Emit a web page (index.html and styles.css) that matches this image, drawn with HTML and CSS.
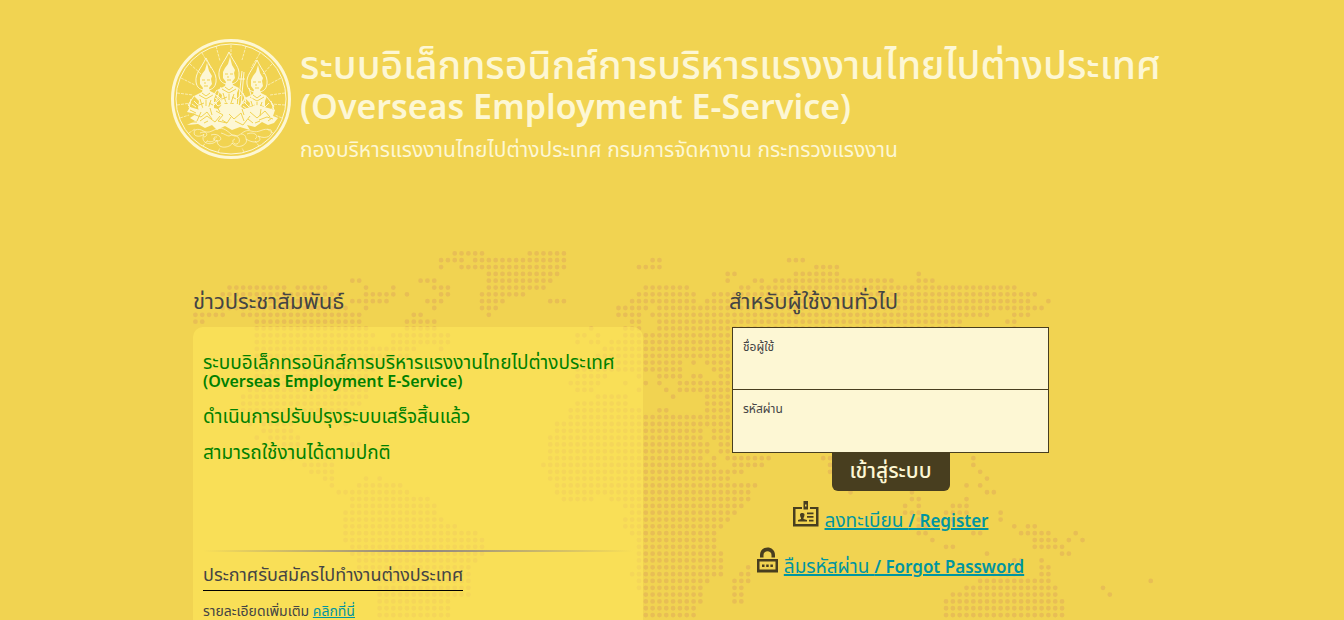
FILE: index.html
```
<!DOCTYPE html>
<html lang="th">
<head>
<meta charset="utf-8">
<meta name="viewport" content="width=device-width, initial-scale=1">
<title>ระบบอิเล็กทรอนิกส์การบริหารแรงงานไทยไปต่างประเทศ</title>
<link rel="stylesheet" href="styles.css">
</head>
<body>
<header class="banner">
  <svg class="emblem" viewBox="0 0 120 120" aria-hidden="true">
    <defs>
      <g id="deity">
        <path class="line" d="M0-23C-5-12-11-8-10 1C-9 7-6 8-3 9M0-23C5-12 11-8 10 1C9 7 6 8 3 9"/>
        <path class="solid" d="M1-18L3-10L6-5L5-2L6 3L3 7L4 10L10 13L8 18L8 28L4 33L-5 33L-8 27L-7 20L-12 15L-4 11L-3 7L-6 3L-6-3L-4-7L-1-11Z"/>
        <path class="cut" d="M-4-1h3M1-1h3M-1 1v2M-2 5h4M-7 14L0 18L7 14M-4 12l4 3 4-3M-6 18L-2 31M5 19L1 31M0 19v6M-7 24l5-2M7 24l-4-2M-5 28l4 1M5 28l-3 1"/>
        <path class="line" d="M-12 15L-18 24L-11 31L-3 27M10 14L17 23L11 31L4 27M-15 18l-2 9 5 2M14 18l3 9-5 2M-12 20l4 4M12 20l-4 4M-14 23l4 3"/>
      </g>
    </defs>
    <circle class="ring" cx="60" cy="60" r="58.5"/>
    <circle class="hair" cx="60" cy="60" r="55"/>
    <path class="rays" d="M60 6V16M45 7L49 22M75 7L71 21M31 14L40 29M89 14L80 29M19 25L30 35M101 25L92 35M10 39L24 46M110 39L97 46M6 54L22 56M114 54L99 56M6 66L20 64M114 66L100 65M9 79L18 76M111 79L104 76M18 94L24 90M102 94L96 90M32 107L37 101M88 107L84 102M47 113L49 109M73 113L71 109"/>
    <use href="#deity" x="35" y="42"/>
    <use href="#deity" x="86" y="44"/>
    <use href="#deity" x="58" y="36"/>
    <path class="line" d="M71 32L67 68M73 33L70 66M68 40h6M50 48L44 65M78 49L84 70"/>
    <path class="solid" d="M16 86L24 82L19 79L25 75L16 73L19 68L29 71L35 67L47 70L52 65L66 65L73 70L86 66L97 69L104 71L102 77L107 79L103 84L97 86L91 83L84 88L76 86L79 91L69 88L61 91L54 87L46 91L41 86L34 89L27 85Z"/>
    <path class="cut" d="M19 71l6 3M22 75l8 3 6-5 5 7M29 82l7-5 8 6 5-6M45 72l7 4-5 6 9 2M58 75l5 5 7-6 3 8M64 82l8 4 7-9M79 73l7 6 8-7 5 6M88 81l8-3 6 2M51 81l5 3 4-6M30 73l-4 9M77 80l5 4M39 69l2 7M90 70l-1 7M46 68l3 5M71 70l2 6M20 83h6M97 82l4-3M33 84l4-2M84 84l5-2"/>
    <path class="cloud" d="M24 91C31 88 33 96 41 92S52 88 60 95S71 89 80 92S91 88 100 91M24 91C20 99 31 98 33 95C28 106 43 107 46 101C46 112 61 108 61 104C68 112 78 104 75 100C84 106 93 102 87 97C96 101 102 96 100 91M40 96c8-3 14 6 6 6-5 0-4-5 0-4M58 97c8-4 14 5 8 8-4 1-6-4-2-5M76 95c7-3 13 2 8 5M29 94c7-3 9 3 4 4M50 94c4 1 6 3 8 3M36 102c4 2 8 0 8-3M70 95c4 0 5 3 5 5"/>
  </svg>
  <div class="banner-text">
    <h1>ระบบอิเล็กทรอนิกส์การบริหารแรงงานไทยไปต่างประเทศ<br><span class="title-en">(Overseas Employment E-Service)</span></h1>
    <p>กองบริหารแรงงานไทยไปต่างประเทศ กรมการจัดหางาน กระทรวงแรงงาน</p>
  </div>
</header>

<main class="content">
  <!-- One unit per dot; every horizontal run is drawn as a dotted stroke. -->
  <svg class="world" viewBox="-0.5 -0.5 142 55" aria-hidden="true">
    <path d="M38 0h4.1M49 0h5.1
M36 1h3.1M41 1h13.1M67 1h1.1M87 1h2.1
M36 2h.1M39 2h15.1M65 2h3.1M91 2h3.1
M43 3h10.1M78 3h1.1M88 3h6.1M106 3h.1
M23 4h1.1M33 4h2.1M43 4h9.1M78 4h.1M82 4h1.1M85 4h17.1M106 4h2.1
M5 5h8.1M15 5h4.1M25 5h.1M29 5h.1M35 5h2.1M43 5h8.1M66 5h6.1M80 5h1.1M83 5h37.1
M4 6h17.1M25 6h4.1M31 6h.1M36 6h1.1M42 6h6.1M65 6h8.1M76 6h47.1
M5 7h15.1M23 7h5.1M34 7h2.1M42 7h3.1M52 7h2.1M64 7h9.1M75 7h47.1M125 7h.1
M4 8h18.1M25 8h.1M35 8h.1M42 8h2.1M62 8h4.1M68 8h56.1
M0 9h4.1M7 9h17.1M32 9h1.1M43 9h.1M62 9h3.1M67 9h49.1M120 9h2.1
M0 10h1.1M9 10h15.1M31 10h4.1M64 10h1.1M68 10h44.1M119 10h1.1
M9 11h16.1M31 11h4.1M58 11h.1M63 11h2.1M68 11h44.1M120 11h.1
M9 12h17.1M29 12h8.1M56 12h1.1M59 12h.1M63 12h15.1
M9 13h16.1M29 13h8.1M56 13h.1M58 13h1.1M61 13h17.1
M9 14h23.1M36 14h.1M60 14h18.1
M9 15h22.1M59 15h19.1
M9 16h19.1M57 16h14.1M73 16h.1M75 16h3.1
M9 17h17.1M56 17h15.1M76 17h2.1
M9 18h16.1M56 18h4.1M65 18h.1M68 18h3.1M73 18h1.1M77 18h1.1
M8 19h16.1M55 19h4.1M63 19h.1M66 19h.1M68 19h.1M71 19h7.1
M8 20h17.1M56 20h2.1M65 20h.1M69 20h.1M71 20h7.1
M7 21h18.1M59 21h4.1M70 21h.1M75 21h3.1
M7 22h17.1M56 22h7.1M75 22h3.1
M7 23h15.1M55 23h10.1M68 23h1.1M75 23h3.1
M8 24h12.1M55 24h23.1
M8 25h.1M10 25h4.1M22 25h.1M53 25h25.1
M10 26h4.1M53 26h21.1M76 26h2.1
M9 27h.1M11 27h4.1M52 27h22.1M76 27h2.1
M13 28h2.1M23 28h1.1M52 28h23.1M77 28h1.1
M13 29h1.1M52 29h23.1M77 29h1.1
M13 30h1.1M17 30h3.1M52 30h22.1M76 30h.1M78 30h6.1M92 30h1.1M114 30h.1
M16 31h4.1M51 31h.1M52 31h24.1M79 31h4.1M93 31h.1M114 31h.1
M17 32h3.1M52 32h28.1M93 32h.1M115 32h.1
M19 33h1.1M25 33h.1M27 33h.1M52 33h26.1M116 33h.1
M20 34h.1M24 34h6.1M53 34h29.1M113 34h.1M115 34h.1
M21 35h10.1M53 35h28.1M96 35h.1M105 35h.1M116 35h1.1
M23 36h11.1M54 36h4.1M61 36h20.1M105 36h1.1M113 36h.1
M23 37h12.1M63 37h17.1M104 37h.1M106 37h.1M111 37h2.1
M22 38h13.1M64 38h15.1M104 38h2.1M110 38h3.1M118 38h.1
M22 39h14.1M63 39h15.1M106 39h.1M111 39h1.1M118 39h.1
M22 40h16.1M63 40h14.1M106 40h1.1M120 40h.1M122 40h1.1
M22 41h19.1M64 41h12.1M106 41h1.1M114 41h1.1M121 41h4.1M129 41h.1
M22 42h20.1M65 42h11.1M108 42h.1M123 42h3.1M128 42h.1M130 42h.1
M23 43h19.1M65 43h11.1M110 43h1.1M123 43h4.1
M23 44h19.1M65 44h12.1M116 44h.1M127 44h1.1
M24 45h17.1M65 45h12.1M120 45h1.1M124 45h.1
M24 46h16.1M65 46h12.1M81 46h.1M124 46h1.1
M25 47h15.1M64 47h13.1M80 47h1.1M117 47h4.1M124 47h1.1
M27 48h13.1M65 48h10.1M79 48h2.1M115 48h10.1M140 48h.1
M27 49h13.1M65 49h9.1M79 49h1.1M113 49h13.1M133 49h.1
M27 50h13.1M66 50h8.1M79 50h1.1M111 50h15.1M134 50h.1
M27 51h10.1M66 51h8.1M79 51h1.1M110 51h17.1
M27 52h10.1M66 52h7.1M110 52h17.1
M27 53h10.1M66 53h7.1M110 53h17.1"/>
  </svg>

  <section class="news">
    <h2>ข่าวประชาสัมพันธ์</h2>
    <div class="news-panel">
      <div class="notice">
        <p>ระบบอิเล็กทรอนิกส์การบริหารแรงงานไทยไปต่างประเทศ<br><span class="notice-en">(Overseas Employment E-Service)</span></p>
        <p>ดำเนินการปรับปรุงระบบเสร็จสิ้นแล้ว</p>
        <p>สามารถใช้งานได้ตามปกติ</p>
      </div>
      <hr class="divider">
      <h3>ประกาศรับสมัครไปทำงานต่างประเทศ</h3>
      <p class="more">รายละเอียดเพิ่มเติม <a href="#news">คลิกที่นี่</a></p>
    </div>
  </section>

  <section class="login">
    <h2>สำหรับผู้ใช้งานทั่วไป</h2>
    <form>
      <div class="field">
        <label for="username">ชื่อผู้ใช้</label>
        <input id="username" type="text" autocomplete="username">
      </div>
      <div class="field">
        <label for="password">รหัสผ่าน</label>
        <input id="password" type="password" autocomplete="current-password">
      </div>
      <button type="submit">เข้าสู่ระบบ</button>
    </form>
    <p class="action">
      <svg class="icon" viewBox="0 0 26 26" aria-hidden="true">
        <path d="M0 6H9V8H2.500V23H23V8H17V6H25.500V25.500H0Z"/>
        <path d="M10.500 0h4.500v8.500h-4.500zM12 3.500v2h1.500v-2z" fill-rule="evenodd"/>
        <path d="M7 13.500C7 11.500 11.500 11.500 11.500 13.500C11.500 15 11 16 10.500 17V18L14 19V20.500H5V19L8 18V17C7.500 16 7 15 7 13.500ZM14 11.500h6.500v1.800H14zM14 15h6.500v1.800H14zM16 18.700h4.500v1.800H16z"/>
      </svg>
      <a href="#register">ลงทะเบียน <span class="latin">/ Register</span></a>
    </p>
    <p class="action">
      <svg class="icon icon-lock" viewBox="0 0 21 26" aria-hidden="true">
        <path d="M3 10.500V8C3 -2 18 -2 18 8V10.500H14.500V8C14.500 3 6.500 3 6.500 8V10.500Z"/>
        <path d="M0 12H21V25.500H0ZM2.500 14.500V22.500H18.500V14.500Z" fill-rule="evenodd"/>
        <path d="M5 17.500h2.500v2.500H5zM9.200 17.500h2.500v2.500H9.200zM13.400 17.500h2.500v2.500h-2.500z"/>
      </svg>
      <a href="#forgot">ลืมรหัสผ่าน <span class="latin">/ Forgot Password</span></a>
    </p>
  </section>
</main>
</body>
</html>
```
FILE: styles.css
```
* {
  box-sizing: border-box;
}

body {
  margin: 0;
  min-height: 100vh;
  overflow: hidden;
  background: #f1d351;
  color: #444444;
  font-family: "Noto Sans Thai", "Noto Sans", "Open Sans", sans-serif;
}

h1,
h2,
h3,
p {
  margin: 0;
  font-weight: 400;
}

.banner,
.content {
  width: 100%;
  max-width: 1002px;
  margin: 0 auto;
}

.banner {
  display: flex;
  gap: 9px;
  height: 280px;
  padding-top: 39px;
  color: #fdf7d4;
  white-space: nowrap;
}

.emblem {
  flex: none;
  width: 120px;
  height: 120px;
  stroke-linejoin: round;
}

.emblem .ring { fill: none; stroke: #fdf7d4; stroke-width: 3; }
.emblem .hair { fill: none; stroke: #fdf7d4; stroke-width: 1; }
.emblem .rays { fill: none; stroke: #fdf7d4; stroke-width: 1; stroke-dasharray: 3 1; opacity: 0.7; }
.emblem .line { fill: none; stroke: #fdf7d4; stroke-width: 1; }
.emblem .cloud { fill: none; stroke: #fdf7d4; stroke-width: 1; opacity: 0.7; }
.emblem .solid { fill: #fdf7d4; }
.emblem .cut { fill: none; stroke: #f1d351; stroke-width: 1; }

.banner-text h1 {
  padding-top: 9px;
  font-size: 39px;
  font-weight: 500;
  line-height: 40px;
}

.title-en {
  font-size: 34px;
  font-weight: 600;
}

.banner-text p {
  padding-top: 10px;
  font-size: 21px;
  line-height: 24px;
}

.content {
  position: relative;
  display: flex;
  gap: 87px;
  padding-left: 22px;
}

.world {
  position: absolute;
  left: 21px;
  top: -30px;
  width: 969px;
  fill: none;
  stroke: #e8be55;
  stroke-width: 0.7;
  stroke-linecap: round;
  stroke-dasharray: 0 1;
}

.news,
.login {
  position: relative;
}

h2 {
  height: 47px;
  font-size: 22px;
  line-height: 46px;
  white-space: nowrap;
}

.news {
  width: 450px;
}

.news-panel {
  padding: 28px 10px;
  border-radius: 10px;
  background: rgba(255, 233, 92, 0.55);
  white-space: nowrap;
}

.notice {
  display: grid;
  gap: 18px;
  height: 195px;
  align-content: start;
  color: #008000;
  font-size: 19px;
  line-height: 18px;
}

.notice-en {
  font-size: 16px;
  font-weight: 600;
}

.divider {
  height: 2px;
  margin: 0;
  border: 0;
  background: linear-gradient(to right, transparent, #8c8383 50%, transparent);
}

h3 {
  width: fit-content;
  margin-top: 10px;
  border-bottom: 1px solid #000000;
  font-size: 18px;
  line-height: 28px;
}

.more {
  padding-top: 9px;
  font-size: 14px;
  line-height: 24px;
}

a {
  color: #0095a0;
}

.login {
  width: 320px;
}

.login h2 {
  margin-left: -1px;
}

form,
.action {
  width: 317px;
  margin-left: 2px;
}

form {
  display: flex;
  flex-direction: column;
  align-items: center;
}

.field {
  display: flex;
  flex-direction: column;
  width: 100%;
  height: 63px;
  padding: 10px;
  border: 1px solid #483e1f;
  background: #fdf7d4;
}

.field + .field {
  height: 64px;
  margin-top: -1px;
}

.field label {
  font-size: 12px;
  line-height: 18px;
}

.field input {
  width: 100%;
  height: 24px;
  padding: 0;
  border: 0;
  outline: 0;
  background: transparent;
  font-size: 16px;
}

button {
  width: 118px;
  height: 38px;
  padding: 0;
  border: 0;
  border-radius: 0 0 6px 6px;
  background: #483e1f;
  color: #fdf7d4;
  font-family: inherit;
  font-size: 21px;
  font-weight: 500;
  line-height: 38px;
}

.action {
  display: flex;
  justify-content: center;
  gap: 6px;
  height: 46px;
  padding-top: 10px;
  font-size: 19px;
  line-height: 42px;
  white-space: nowrap;
}

.latin {
  font-size: 17px;
  font-weight: 600;
}

.action a {
  text-decoration-thickness: 2px;
}

.icon {
  flex: none;
  width: 26px;
  height: 26px;
  fill: #483e1f;
}

.icon-lock {
  width: 21px;
}
```
